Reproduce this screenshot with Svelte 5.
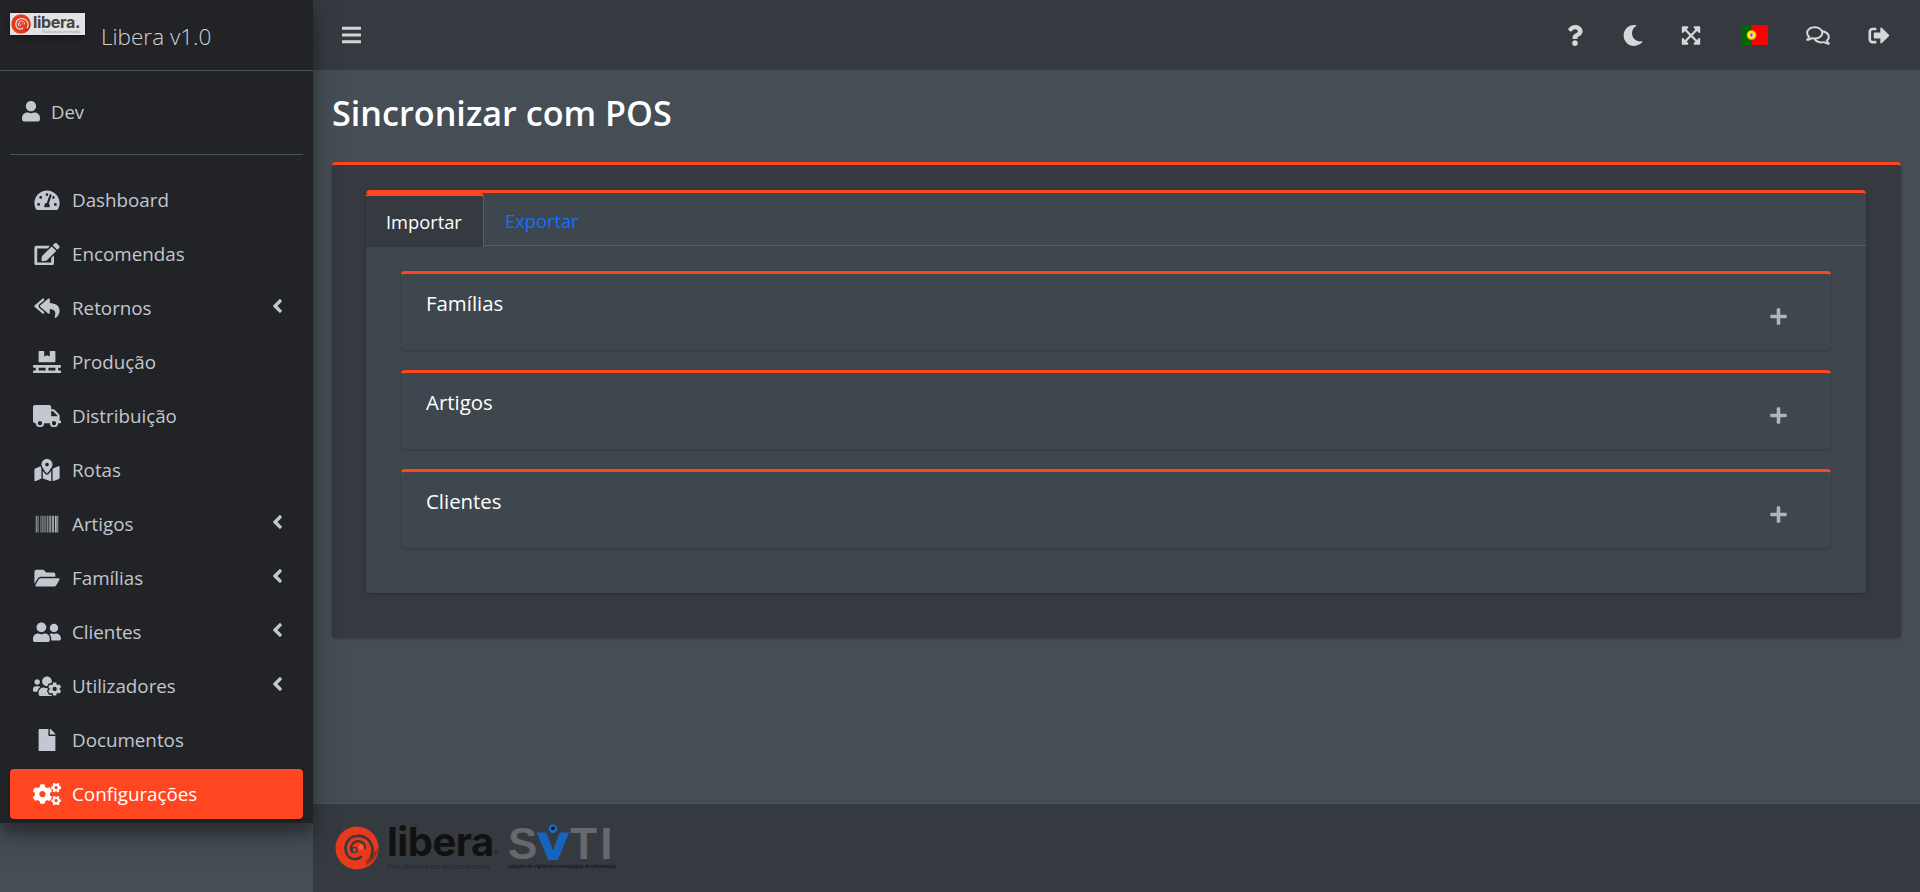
<script>
  const icons = {
    user: ['0 0 448 512', 'M224 256c70.7 0 128-57.3 128-128S294.7 0 224 0 96 57.3 96 128s57.3 128 128 128zm89.6 32h-16.7c-22.2 10.2-46.9 16-72.9 16s-50.6-5.8-72.9-16h-16.7C60.2 288 0 348.2 0 422.4V464c0 26.5 21.5 48 48 48h352c26.5 0 48-21.5 48-48v-41.6c0-74.2-60.2-134.4-134.4-134.4z'],
    gauge: ['0 0 576 512', 'M288 32C128.94 32 0 160.94 0 320c0 52.8 14.25 102.26 39.06 144.8 5.61 9.62 16.3 15.2 27.44 15.2h443c11.14 0 21.83-5.58 27.44-15.2C561.75 422.26 576 372.8 576 320c0-159.06-128.94-288-288-288zm0 64c14.71 0 26.58 10.13 30.32 23.65-1.11 2.26-2.64 4.23-3.45 6.67l-9.22 27.67c-5.13 3.49-10.97 6.01-17.64 6.01-17.67 0-32-14.33-32-32S270.33 96 288 96zM96 384c-17.67 0-32-14.33-32-32s14.33-32 32-32 32 14.33 32 32-14.33 32-32 32zm48-160c-17.67 0-32-14.33-32-32s14.33-32 32-32 32 14.33 32 32-14.33 32-32 32zm246.77-72.41l-61.33 184C343.13 347.33 352 364.54 352 384c0 11.72-3.38 22.55-8.88 32H232.88c-5.5-9.45-8.88-20.28-8.88-32 0-33.94 26.5-61.43 59.9-63.59l61.34-184.01c4.17-12.56 17.73-19.45 30.36-15.17 12.57 4.19 19.35 17.79 15.17 30.36zm14.66 57.2l15.52-46.55c3.47-1.29 7.13-2.23 11.05-2.23 17.67 0 32 14.33 32 32s-14.33 32-32 32c-11.38-.01-20.89-6.28-26.57-15.22zM480 384c-17.67 0-32-14.33-32-32s14.33-32 32-32 32 14.33 32 32-14.33 32-32 32z'],
    edit: ['0 0 576 512', 'M402.6 83.2l90.2 90.2c3.8 3.8 3.8 10 0 13.8L274.4 405.6l-92.8 10.3c-12.4 1.4-22.9-9.1-21.5-21.5l10.3-92.8L388.8 83.2c3.8-3.8 10-3.8 13.8 0zm162-22.9l-48.8-48.8c-15.2-15.2-39.9-15.2-55.2 0l-35.4 35.4c-3.8 3.8-3.8 10 0 13.8l90.2 90.2c3.8 3.8 10 3.8 13.8 0l35.4-35.4c15.2-15.3 15.2-40 0-55.2zM384 346.2V448H64V128h229.8c3.2 0 6.2-1.3 8.5-3.5l40-40c7.6-7.6 2.2-20.5-8.5-20.5H48C21.5 64 0 85.5 0 112v352c0 26.5 21.5 48 48 48h352c26.5 0 48-21.5 48-48V306.2c0-10.7-12.9-16-20.5-8.5l-40 40c-2.2 2.3-3.5 5.3-3.5 8.5z'],
    replyAll: ['0 0 576 512', 'M136.309 189.836L312.313 37.851C327.72 24.546 352 35.348 352 56.015v82.763c129.182 10.231 224 52.212 224 183.548 0 61.441-39.582 122.309-83.333 154.132-13.653 9.931-33.111-2.533-28.077-18.631 38.512-123.162-3.922-169.482-112.59-182.015v84.175c0 20.701-24.3 31.453-39.687 18.164L136.309 226.164c-11.071-9.561-11.086-26.753 0-36.328zm-128 36.328L184.313 378.15C199.7 391.439 224 380.687 224 359.986v-15.818l-108.606-93.785A55.96 55.96 0 0 1 96 207.998a55.953 55.953 0 0 1 19.393-42.38L224 71.832V56.015c0-20.667-24.28-31.469-39.687-18.164L8.309 189.836c-11.086 9.575-11.071 26.767 0 36.328z'],
    pallet: ['0 0 640 512', 'M144 256h352c8.8 0 16-7.2 16-16V16c0-8.8-7.2-16-16-16H384v128l-64-32-64 32V0H144c-8.8 0-16 7.2-16 16v224c0 8.8 7.2 16 16 16zm480 128c8.8 0 16-7.2 16-16v-32c0-8.8-7.2-16-16-16H16c-8.8 0-16 7.2-16 16v32c0 8.8 7.2 16 16 16h48v64H16c-8.8 0-16 7.2-16 16v32c0 8.8 7.2 16 16 16h608c8.8 0 16-7.2 16-16v-32c0-8.8-7.2-16-16-16h-48v-64h48zm-336 64H128v-64h160v64zm224 0H352v-64h160v64z'],
    truck: ['0 0 640 512', 'M624 352h-16V243.9c0-12.7-5.1-24.9-14.1-33.9L494 110.1c-9-9-21.2-14.1-33.9-14.1H416V48c0-26.5-21.5-48-48-48H48C21.5 0 0 21.5 0 48v320c0 26.5 21.5 48 48 48h16c0 53 43 96 96 96s96-43 96-96h128c0 53 43 96 96 96s96-43 96-96h48c8.8 0 16-7.2 16-16v-32c0-8.8-7.2-16-16-16zM160 464c-26.5 0-48-21.5-48-48s21.5-48 48-48 48 21.5 48 48-21.5 48-48 48zm320 0c-26.5 0-48-21.5-48-48s21.5-48 48-48 48 21.5 48 48-21.5 48-48 48zm80-208H416V144h44.1l99.9 99.9V256z'],
    map: ['0 0 576 512', 'M288 0c-69.59 0-126 56.41-126 126 0 56.26 82.35 158.8 113.9 196.02 6.39 7.54 17.82 7.54 24.2 0C331.65 284.8 414 182.26 414 126 414 56.41 357.59 0 288 0zm0 168c-23.2 0-42-18.8-42-42s18.8-42 42-42 42 18.8 42 42-18.8 42-42 42zM20.12 215.95A32.006 32.006 0 0 0 0 245.66v250.32c0 11.32 11.43 19.06 21.94 14.86L160 448V214.92c-8.84-15.98-16.07-31.54-21.25-46.42L20.12 215.95zM288 359.67c-14.07 0-27.38-6.18-36.51-16.96-19.66-23.2-40.57-49.62-59.49-76.72V448l192 64V266c-18.92 27.09-39.82 53.52-59.49 76.72-9.13 10.77-22.44 16.95-36.51 16.95zm266.06-198.51L416 224v288l139.88-55.95A31.996 31.996 0 0 0 576 426.34V176.02c0-11.32-11.43-19.06-21.94-14.86z'],
    barcode: ['0 0 512 512', 'M0 448V64h18v384H0zm26.857-.273V64H36v383.727h-9.143zm27.143 0V64h8.857v383.727H54zm44.857 0V64h8.857v383.727h-8.857zm36 0V64h17.714v383.727h-17.714zm44.857 0V64h8.857v383.727h-8.857zm18 0V64h8.857v383.727h-8.857zm18 0V64h8.857v383.727h-8.857zm35.715 0V64h18v383.727h-18zm44.857 0V64h18v383.727h-18zm35.999 0V64h18.001v383.727h-18.001zm36.001 0V64h18.001v383.727h-18.001zm26.857 0V64h18v383.727h-18zm45.143 0V64h26.857v383.727h-26.857zm35.714 0V64h9.143v383.727H476zm18 .273V64h18v384h-18z'],
    folder: ['0 0 576 512', 'M572.694 292.093L500.27 416.248A63.997 63.997 0 0 1 444.989 448H45.025c-18.523 0-30.064-20.093-20.731-36.093l72.424-124.155A64 64 0 0 1 152 256h399.964c18.523 0 30.064 20.093 20.73 36.093zM152 224h328v-48c0-26.51-21.49-48-48-48H272l-64-64H48C21.49 64 0 85.49 0 112v278.046l69.077-118.418C86.214 242.25 117.989 224 152 224z'],
    friends: ['0 0 640 512', 'M192 256c61.9 0 112-50.1 112-112S253.9 32 192 32 80 82.1 80 144s50.1 112 112 112zm76.8 32h-8.3c-20.8 10-43.9 16-68.5 16s-47.6-6-68.5-16h-8.3C51.6 288 0 339.6 0 403.2V432c0 26.5 21.5 48 48 48h288c26.5 0 48-21.5 48-48v-28.8c0-63.6-51.6-115.2-115.2-115.2zM480 256c53 0 96-43 96-96s-43-96-96-96-96 43-96 96 43 96 96 96zm48 32h-3.8c-13.9 4.8-28.6 8-44.2 8s-30.3-3.2-44.2-8H432c-20.4 0-39.2 5.9-55.7 15.4 24.4 26.3 39.7 61.2 39.7 99.8v38.4c0 2.2-.5 4.3-.6 6.4H592c26.5 0 48-21.5 48-48 0-61.9-50.1-112-112-112z'],
    usersCog: ['0 0 640 512', 'M610.5 341.3c2.6-14.1 2.6-28.5 0-42.6l25.8-14.9c3-1.7 4.3-5.2 3.3-8.5-6.7-21.6-18.2-41.2-33.2-57.4-2.3-2.5-6-3.1-9-1.4l-25.8 14.9c-10.9-9.3-23.4-16.5-36.9-21.3v-29.8c0-3.4-2.4-6.4-5.7-7.1-22.3-5-45-4.8-66.2 0-3.3.7-5.7 3.7-5.7 7.1v29.8c-13.5 4.8-26 12-36.9 21.3l-25.8-14.9c-2.9-1.7-6.7-1.1-9 1.4-15 16.2-26.5 35.8-33.2 57.4-1 3.3.4 6.8 3.3 8.5l25.8 14.9c-2.6 14.1-2.6 28.5 0 42.6l-25.8 14.9c-3 1.7-4.3 5.2-3.3 8.5 6.7 21.6 18.2 41.1 33.2 57.4 2.3 2.5 6 3.1 9 1.4l25.8-14.9c10.9 9.3 23.4 16.5 36.9 21.3v29.8c0 3.4 2.4 6.4 5.7 7.1 22.3 5 45 4.8 66.2 0 3.3-.7 5.7-3.7 5.7-7.1v-29.8c13.5-4.8 26-12 36.9-21.3l25.8 14.9c2.9 1.7 6.7 1.1 9-1.4 15-16.2 26.5-35.8 33.2-57.4 1-3.3-.4-6.8-3.3-8.5l-25.8-14.9zM496 368.5c-26.8 0-48.5-21.8-48.5-48.5s21.8-48.5 48.5-48.5 48.5 21.8 48.5 48.5-21.7 48.5-48.5 48.5zM96 224c35.3 0 64-28.7 64-64s-28.7-64-64-64-64 28.7-64 64 28.7 64 64 64zm224 32c1.9 0 3.7-.5 5.6-.6 8.3-21.7 20.5-42.1 36.3-59.2 7.4-8 17.9-12.6 28.9-12.6 6.9 0 13.7 1.8 19.6 5.3l7.9 4.6c.8-.5 1.6-.9 2.4-1.4 7-14.6 11.2-30.8 11.2-48 0-61.9-50.1-112-112-112S208 82.1 208 144c0 61.9 50.1 112 112 112zm105.2 194.5c-2.3-1.2-4.6-2.6-6.8-3.9-8.2 4.8-15.3 9.8-27.5 9.8-10.9 0-21.4-4.6-28.9-12.6-18.3-19.8-32.3-43.9-40.2-69.6-10.7-34.5 24.9-49.7 25.8-50.3-.1-2.6-.1-5.2 0-7.8l-7.9-4.6c-3.8-2.2-7-5-9.8-8.1-3.3.2-6.5.6-9.8.6-24.6 0-47.6-6-68.5-16h-8.3C179.6 288 128 339.6 128 403.2V432c0 26.5 21.5 48 48 48h255.4c-3.7-6-6.2-12.8-6.2-20.3v-9.2zM173.1 274.6C161.5 263.1 145.6 256 128 256H64c-35.3 0-64 28.7-64 64v32c0 17.7 14.3 32 32 32h65.9c6.3-47.4 34.9-87.3 75.2-109.4z'],
    file: ['0 0 384 512', 'M224 136V0H24C10.7 0 0 10.7 0 24v464c0 13.3 10.7 24 24 24h336c13.3 0 24-10.7 24-24V160H248c-13.2 0-24-10.8-24-24zm160-14.1v6.1H256V0h6.1c6.4 0 12.5 2.5 17 7l97.9 98c4.5 4.5 7 10.6 7 16.9z'],
    cogs: ['0 0 640 512', 'M512.1 191l-8.2 14.3c-3 5.3-9.4 7.5-15.1 5.4-11.8-4.4-22.6-10.7-32.1-18.6-4.6-3.8-5.8-10.5-2.8-15.7l8.2-14.3c-6.9-8-12.3-17.3-15.9-27.4h-16.5c-6 0-11.2-4.3-12.2-10.3-2-12-2.1-24.6 0-37.1 1-6 6.2-10.4 12.2-10.4h16.5c3.6-10.1 9-19.4 15.9-27.4l-8.2-14.3c-3-5.2-1.9-11.9 2.8-15.7 9.5-7.9 20.4-14.2 32.1-18.6 5.7-2.1 12.1.1 15.1 5.4l8.2 14.3c10.5-1.9 21.2-1.9 31.7 0L552 6.3c3-5.3 9.4-7.5 15.1-5.4 11.8 4.4 22.6 10.7 32.1 18.6 4.6 3.8 5.8 10.5 2.8 15.7l-8.2 14.3c6.9 8 12.3 17.3 15.9 27.4h16.5c6 0 11.2 4.3 12.2 10.3 2 12 2.1 24.6 0 37.1-1 6-6.2 10.4-12.2 10.4h-16.5c-3.6 10.1-9 19.4-15.9 27.4l8.2 14.3c3 5.2 1.9 11.9-2.8 15.7-9.5 7.9-20.4 14.2-32.1 18.6-5.7 2.1-12.1-.1-15.1-5.4l-8.2-14.3c-10.4 1.9-21.2 1.9-31.7 0zm-10.5-58.8c38.5 29.6 82.4-14.3 52.8-52.8-38.5-29.7-82.4 14.3-52.8 52.8zM386.3 286.1l33.7 16.8c10.1 5.8 14.5 18.1 10.5 29.1-8.9 24.2-26.4 46.4-42.6 65.8-7.4 8.9-20.2 11.1-30.3 5.3l-29.1-16.8c-16 13.7-34.6 24.6-54.9 31.7v33.6c0 11.6-8.3 21.6-19.7 23.6-24.6 4.2-50.4 4.4-75.9 0-11.5-2-20-11.9-20-23.6V418c-20.3-7.2-38.9-18-54.9-31.7L74 403c-10 5.8-22.9 3.6-30.3-5.3-16.2-19.4-33.3-41.6-42.2-65.7-4-10.9.4-23.2 10.5-29.1l33.3-16.8c-3.9-20.9-3.9-42.4 0-63.4L12 205.8c-10.1-5.8-14.6-18.1-10.5-29 8.9-24.2 26-46.4 42.2-65.8 7.4-8.9 20.2-11.1 30.3-5.3l29.1 16.8c16-13.7 34.6-24.6 54.9-31.7V57.1c0-11.5 8.2-21.5 19.6-23.5 24.6-4.2 50.5-4.4 76-.1 11.5 2 20 11.9 20 23.6v33.6c20.3 7.2 38.9 18 54.9 31.7l29.1-16.8c10-5.8 22.9-3.6 30.3 5.3 16.2 19.4 33.2 41.6 42.1 65.8 4 10.9.1 23.2-10 29.1l-33.7 16.8c3.9 21 3.9 42.5 0 63.5zm-117.6 21.1c59.2-77-28.7-164.9-105.7-105.7-59.2 77 28.7 164.9 105.7 105.7zm243.4 182.7l-8.2 14.3c-3 5.3-9.4 7.5-15.1 5.4-11.8-4.4-22.6-10.7-32.1-18.6-4.6-3.8-5.8-10.5-2.8-15.7l8.2-14.3c-6.9-8-12.3-17.3-15.9-27.4h-16.5c-6 0-11.2-4.3-12.2-10.3-2-12-2.1-24.6 0-37.1 1-6 6.2-10.4 12.2-10.4h16.5c3.6-10.1 9-19.4 15.9-27.4l-8.2-14.3c-3-5.2-1.9-11.9 2.8-15.7 9.5-7.9 20.4-14.2 32.1-18.6 5.7-2.1 12.1.1 15.1 5.4l8.2 14.3c10.5-1.9 21.2-1.9 31.7 0l8.2-14.3c3-5.3 9.4-7.5 15.1-5.4 11.8 4.4 22.6 10.7 32.1 18.6 4.6 3.8 5.8 10.5 2.8 15.7l-8.2 14.3c6.9 8 12.3 17.3 15.9 27.4h16.5c6 0 11.2 4.3 12.2 10.3 2 12 2.1 24.6 0 37.1-1 6-6.2 10.4-12.2 10.4h-16.5c-3.6 10.1-9 19.4-15.9 27.4l8.2 14.3c3 5.2 1.9 11.9-2.8 15.7-9.5 7.9-20.4 14.2-32.1 18.6-5.7 2.1-12.1-.1-15.1-5.4l-8.2-14.3c-10.4 1.9-21.2 1.9-31.7 0zM501.6 431c38.5 29.6 82.4-14.3 52.8-52.8-38.5-29.6-82.4 14.3-52.8 52.8z'],
    angle: ['0 0 256 512', 'M31.7 239l136-136c9.4-9.4 24.6-9.4 33.9 0l22.6 22.6c9.4 9.4 9.4 24.6 0 33.9L127.9 256l96.4 96.4c9.4 9.4 9.4 24.6 0 33.9L201.7 409c-9.4 9.4-24.6 9.4-33.9 0l-136-136c-9.5-9.4-9.5-24.6-.1-34z'],
    bars: ['0 0 448 512', 'M16 132h416c8.837 0 16-7.163 16-16V76c0-8.837-7.163-16-16-16H16C7.163 60 0 67.163 0 76v40c0 8.837 7.163 16 16 16zm0 160h416c8.837 0 16-7.163 16-16v-40c0-8.837-7.163-16-16-16H16c-8.837 0-16 7.163-16 16v40c0 8.837 7.163 16 16 16zm0 160h416c8.837 0 16-7.163 16-16v-40c0-8.837-7.163-16-16-16H16c-8.837 0-16 7.163-16 16v40c0 8.837 7.163 16 16 16z'],
    question: ['0 0 384 512', 'M202.021 0C122.202 0 70.503 32.703 29.914 91.026c-7.363 10.58-5.093 25.086 5.178 32.874l43.138 32.709c10.373 7.865 25.132 6.026 33.253-4.148 25.049-31.381 43.63-49.449 82.757-49.449 30.764 0 68.816 19.799 68.816 49.631 0 22.552-18.617 34.134-48.993 51.164-35.423 19.86-82.299 44.576-82.299 106.405V320c0 13.255 10.745 24 24 24h72.471c13.255 0 24-10.745 24-24v-5.773c0-42.86 125.268-44.645 125.268-160.627C377.504 66.256 286.902 0 202.021 0zM192 373.459c-38.196 0-69.271 31.075-69.271 69.271 0 38.195 31.075 69.27 69.271 69.27s69.271-31.075 69.271-69.271-31.075-69.27-69.271-69.27z'],
    moon: ['0 0 512 512', 'M283.211 512c78.962 0 151.079-35.925 198.857-94.792 7.068-8.708-.639-21.43-11.562-19.35-124.203 23.654-238.262-71.576-238.262-196.954 0-72.222 38.662-138.635 101.498-174.394 9.686-5.512 7.25-20.197-3.756-22.23A258.156 258.156 0 0 0 283.211 0c-141.309 0-256 114.511-256 256 0 141.309 114.511 256 256 256z'],
    expand: ['0 0 448 512', 'M448 344v112a23.94 23.94 0 0 1-24 24H312c-21.39 0-32.09-25.9-17-41l36.2-36.2L224 295.6 116.77 402.9 153 439c15.09 15.1 4.39 41-17 41H24a23.94 23.94 0 0 1-24-24V344c0-21.4 25.89-32.1 41-17l36.19 36.2L184.46 256 77.18 148.7 41 185c-15.1 15.1-41 4.4-41-17V56a23.94 23.94 0 0 1 24-24h112c21.39 0 32.09 25.9 17 41l-36.2 36.2L224 216.4l107.23-107.3L295 73c-15.09-15.1-4.39-41 17-41h112a23.94 23.94 0 0 1 24 24v112c0 21.4-25.89 32.1-41 17l-36.19-36.2L263.54 256l107.28 107.3L407 327.1c15.1-15.2 41-4.5 41 16.9z'],
    comments: ['0 0 576 512', 'M532 386.2c27.5-27.1 44-61.1 44-98.2 0-80-76.5-146.1-176.2-157.9C368.3 72.5 294.3 32 208 32 93.1 32 0 103.6 0 192c0 37 16.5 71 44 98.2-15.3 30.7-37.3 54.5-37.7 54.9-6.3 6.7-8.1 16.5-4.4 25 3.6 8.5 12 14 21.2 14 53.5 0 96.7-20.2 125.2-38.8 9.2 2.1 18.7 3.7 28.4 4.9C208.1 407.6 281.8 448 368 448c20.8 0 40.8-2.4 59.8-6.8C456.3 459.7 499.4 480 553 480c9.2 0 17.5-5.5 21.2-14 3.6-8.5 1.9-18.3-4.4-25-.4-.3-22.5-24.1-37.8-54.8zm-392.8-92.3L122.1 305c-14.1 9.1-28.5 16.3-43.1 21.4 2.7-4.7 5.4-9.7 8-14.8l15.5-31.1L77.7 256C64.2 242.6 48 220.7 48 192c0-60.7 73.3-112 160-112s160 51.3 160 112-73.3 112-160 112c-16.5 0-33-1.9-49-5.6l-19.8-4.5zM498.3 352l-24.7 24.4 15.5 31.1c2.6 5.1 5.3 10.1 8 14.8-14.6-5.1-29-12.3-43.1-21.4l-17.1-11.1-19.9 4.6c-16 3.7-32.5 5.6-49 5.6-54 0-102.2-20.1-131.3-49.7C338 339.5 416 272.9 416 192c0-3.4-.4-6.7-.7-10C479.7 196.5 528 238.8 528 288c0 28.7-16.2 50.6-29.7 64z'],
    signOut: ['0 0 512 512', 'M497 273L329 441c-15 15-41 4.5-41-17v-96H152c-13.3 0-24-10.7-24-24v-96c0-13.3 10.7-24 24-24h136V88c0-21.4 25.9-32 41-17l168 168c9.3 9.4 9.3 24.6 0 34zM192 436v-40c0-6.6-5.4-12-12-12H96c-17.7 0-32-14.3-32-32V160c0-17.7 14.3-32 32-32h84c6.6 0 12-5.4 12-12V76c0-6.6-5.4-12-12-12H96c-53 0-96 43-96 96v192c0 53 43 96 96 96h84c6.6 0 12-5.4 12-12z'],
    plus: ['0 0 448 512', 'M416 208H272V64c0-17.67-14.33-32-32-32h-32c-17.67 0-32 14.33-32 32v144H32c-17.67 0-32 14.33-32 32v32c0 17.67 14.33 32 32 32h144v144c0 17.67 14.33 32 32 32h32c17.67 0 32-14.33 32-32V304h144c17.67 0 32-14.33 32-32v-32c0-17.67-14.33-32-32-32z']
  };

  const nav = [
    { label: 'Dashboard', icon: 'gauge' },
    { label: 'Encomendas', icon: 'edit' },
    { label: 'Retornos', icon: 'replyAll', sub: true },
    { label: 'Produção', icon: 'pallet' },
    { label: 'Distribuição', icon: 'truck' },
    { label: 'Rotas', icon: 'map' },
    { label: 'Artigos', icon: 'barcode', sub: true },
    { label: 'Famílias', icon: 'folder', sub: true },
    { label: 'Clientes', icon: 'friends', sub: true },
    { label: 'Utilizadores', icon: 'usersCog', sub: true },
    { label: 'Documentos', icon: 'file' },
    { label: 'Configurações', icon: 'cogs', active: true }
  ];

  const sections = ['Famílias', 'Artigos', 'Clientes'];
</script>

{#snippet fa(name, cls)}
  <svg class={cls} viewBox={icons[name][0]} aria-hidden="true"><path fill="currentColor" d={icons[name][1]} /></svg>
{/snippet}

<!-- swirl mark: the cut lines take currentColor so it sits on either background -->
{#snippet swirl(cls)}
  <svg class={cls} viewBox="0 0 44 44" aria-hidden="true">
    <circle cx="22" cy="22" r="21.5" fill="#e8391c" />
    <path d="M31 39a20 20 0 0 0 12-17l-12 13z" fill="#a32a18" />
    <path d="M36 31C41 20 33 9 22 10C14 10 9 18 11 26C13 33 21 35 26 31" fill="none" stroke="currentColor" stroke-width="2.6" stroke-linecap="round" />
    <path d="M30 22C30 16 24 14 20 16C16 18 15 22 17 26" fill="none" stroke="currentColor" stroke-width="2.2" stroke-linecap="round" />
    <circle cx="19.5" cy="24" r="3.2" fill="currentColor" />
    <circle cx="19.5" cy="24" r="1.9" fill="#e8391c" />
    <circle cx="26" cy="21" r="2.6" fill="#ff5a30" />
  </svg>
{/snippet}

<div class="layout">
  <aside class="sidebar">
    <div class="brand">
      <div class="brand-logo">
        {@render swirl('brand-swirl')}
        <div class="brand-words">
          <span class="brand-name">libera.</span>
          <span class="brand-tag">Plataforma de encomendas</span>
        </div>
      </div>
      <span class="brand-text">Libera v1.0</span>
    </div>
    <div class="panel">
      <div class="user">
        {@render fa('user', 'user-icon')}
        <span>Dev</span>
      </div>
      <ul class="nav">
        {#each nav as item}
          <li class="nav-item" class:active={item.active}>
            <span class="nav-icon">{@render fa(item.icon, 'nav-svg')}</span>
            <span class="nav-label">{item.label}</span>
            {#if item.sub}{@render fa('angle', 'angle')}{/if}
          </li>
        {/each}
      </ul>
    </div>
  </aside>

  <div class="main">
    <header class="topbar">
      <div class="top-link bars">{@render fa('bars', 'top-bars')}</div>
      <div class="top-right">
        <div class="top-link">{@render fa('question', 'top-icon')}</div>
        <div class="top-link">{@render fa('moon', 'top-icon')}</div>
        <div class="top-link">{@render fa('expand', 'top-icon')}</div>
        <div class="top-link flag-link">
          <svg class="flag" viewBox="0 0 27 20" aria-hidden="true">
            <rect width="27" height="20" fill="#f00" />
            <rect width="10.5" height="20" fill="#060" />
            <circle cx="10.5" cy="10" r="4.6" fill="#ffe000" stroke="#c9a400" stroke-width="0.6" />
            <circle cx="10.5" cy="10" r="2.6" fill="#e8e8e8" />
            <rect x="9.5" y="8.5" width="2" height="3" fill="#b33" />
          </svg>
        </div>
        <div class="top-link">{@render fa('comments', 'top-icon')}</div>
        <div class="top-link last">{@render fa('signOut', 'top-icon')}</div>
      </div>
    </header>

    <main class="content">
      <h1>Sincronizar com POS</h1>
      <section class="card outer">
        <div class="tabs-card">
          <div class="tabs">
            <span class="tab active">Importar</span>
            <span class="tab">Exportar</span>
          </div>
          <div class="tab-body">
            {#each sections as title}
              <div class="acc">
                <span class="acc-title">{title}</span>
                {@render fa('plus', 'acc-plus')}
              </div>
            {/each}
          </div>
        </div>
      </section>
    </main>

    <footer class="footer">
      <div class="foot-libera">
        {@render swirl('foot-swirl')}
        <div class="foot-words">
          <span class="foot-name">libera<small>®</small></span>
          <span class="foot-tag">Plataforma de encomendas</span>
        </div>
      </div>
      <div class="svti">
        <div class="svti-mark">
          <span class="svti-s">S</span>
          <svg class="svti-v" viewBox="0 0 40 40" aria-hidden="true">
            <path d="M3 9h10l7 19 7-19h10L25 38h-10z" fill="#1565c0" />
            <circle cx="20" cy="5" r="4.5" fill="#1a6fc4" />
            <circle cx="20" cy="4.5" r="2" fill="#0b1a2c" />
          </svg>
          <span class="svti-s ti">TI</span>
        </div>
        <span class="svti-tag">soluções de vigilância e tecnologias de informação</span>
      </div>
    </footer>
  </div>
</div>

<style>
  :global(body) { margin: 0; background: #454d55; font-family: "Open Sans", "Noto Sans", sans-serif; }

  .layout { display: flex; height: 892px; overflow: hidden; background: #454d55; }

  /* sidebar */
  .sidebar { width: 313px; flex: none; align-self: flex-start; background: #212327; box-shadow: 0 14px 28px rgba(0, 0, 0, .25), 0 10px 10px rgba(0, 0, 0, .22); position: relative; z-index: 2; }
  .brand { height: 71px; box-sizing: border-box; border-bottom: 1px solid #4b545c; position: relative; display: flex; align-items: center; padding-left: 101px; }
  .brand-logo { position: absolute; left: 10px; top: 13px; width: 75px; height: 22px; background: #e2e2e2; color: #e2e2e2; box-shadow: 0 3px 6px rgba(0, 0, 0, .3); display: flex; align-items: center; gap: 2px; padding-left: 1px; box-sizing: border-box; overflow: hidden; }
  .brand-text { color: rgba(255, 255, 255, .8); font-size: 22.5px; font-weight: 300; position: relative; top: 1px; }
  :global(.brand-swirl) { width: 20px; height: 20px; flex: none; }
  .brand-words { display: flex; flex-direction: column; line-height: 1; }
  .brand-name { color: #444; font-size: 16px; font-weight: 700; line-height: 15px; font-family: "Inter", sans-serif; letter-spacing: -0.3px; }
  .brand-tag { color: #888; font-size: 3px; line-height: 4px; padding-left: 9px; white-space: nowrap; }

  .panel { padding: 0 10px; }
  .user { height: 84px; box-sizing: border-box; padding-bottom: 2px; border-bottom: 1px solid #4b545c; margin-bottom: 20px; display: flex; align-items: center; gap: 11px; padding-left: 12px; color: #c2c7d0; font-size: 18.5px; }
  :global(.user-icon) { height: 20.5px; width: 18px; }

  .nav { list-style: none; margin: 0; padding: 0; }
  .nav-item { height: 50px; margin-bottom: 4px; border-radius: 4px; display: flex; align-items: center; color: #c2c7d0; font-size: 18.8px; padding-left: 23px; padding-right: 20px; }
  .nav-item.active { background: #ff4620; color: #fff; box-shadow: 0 1px 3px rgba(0, 0, 0, .12), 0 1px 2px rgba(0, 0, 0, .24); }
  .nav-icon { width: 28px; height: 24px; margin-right: 11px; display: flex; align-items: center; justify-content: center; flex: none; }
  :global(.nav-svg) { height: 22.4px; width: 28px; }
  .nav-label { flex: 1; }
  :global(.angle) { height: 22px; width: 11px; position: relative; top: -2px; }

  /* main column */
  .main { flex: 1; display: flex; flex-direction: column; min-width: 0; }
  .topbar { height: 70px; flex: none; background: #343a40; display: flex; align-items: center; justify-content: space-between; box-sizing: border-box; }
  .top-right { display: flex; align-items: center; padding-right: 9px; }
  .top-link { width: 58px; display: flex; justify-content: center; color: rgba(255, 255, 255, .8); }
  .top-link.bars { width: 77px; }
  .top-link.last { width: 64px; }
  .flag-link { width: 69px; }
  :global(.top-icon) { height: 21px; width: 24px; }
  :global(.top-bars) { height: 22px; width: 19px; }
  .flag { width: 27px; height: 20px; display: block; }

  .content { flex: 1; padding: 0 19px; box-sizing: border-box; }
  h1 { margin: 0; height: 92px; box-sizing: border-box; padding-bottom: 8px; display: flex; align-items: center; color: #fff; font-size: 34.2px; font-weight: 600; }
  .card { border-top: 3px solid #ff4620; border-radius: 4px; box-shadow: 0 0 1px rgba(0, 0, 0, .125), 0 1px 3px rgba(0, 0, 0, .2); }
  .outer { background: #343a40; padding: 25px 35px 45px 34px; }

  .tabs-card { background: #3f474e; border-top: 3px solid #ff4620; border-radius: 4px; box-shadow: 0 0 1px rgba(0, 0, 0, .125), 0 1px 3px rgba(0, 0, 0, .2); }
  .tabs { display: flex; height: 53px; box-sizing: border-box; border-bottom: 1px solid #565e66; }
  .tab { width: 118px; box-sizing: border-box; padding-left: 21px; padding-top: 2px; display: flex; align-items: center; color: #0f70ff; font-size: 18.3px; }
  .tab.active { background: #343a40; color: #fff; border-top: 3px solid #ff4620; border-right: 1px solid #565e66; border-radius: 4px 4px 0 0; height: 54px; padding-left: 20px; padding-top: 0; }

  .tab-body { padding: 25px 35px 45px; display: flex; flex-direction: column; gap: 20px; }
  .acc { height: 79px; box-sizing: border-box; background: #3f474e; border-top: 3px solid #ff4620; border-radius: 4px; box-shadow: 0 0 1px rgba(0, 0, 0, .125), 0 1px 3px rgba(0, 0, 0, .2); display: flex; justify-content: space-between; padding: 15px 44px 0 25px; }
  .acc-title { color: #fff; font-size: 20.4px; line-height: 28px; }
  :global(.acc-plus) { height: 19px; width: 17px; color: #adb5bd; margin-top: 18px; }

  /* footer */
  .footer { height: 89px; flex: none; box-sizing: border-box; background: #343a40; color: #343a40; border-top: 1px solid #4b545c; display: flex; align-items: center; gap: 6px; padding-left: 22px; }
  .foot-libera { display: flex; align-items: center; gap: 8px; }
  :global(.foot-swirl) { width: 44px; height: 44px; }
  .foot-words { display: flex; flex-direction: column; width: 115px; }
  .foot-name { color: #111; font-family: "Inter", sans-serif; font-size: 40px; font-weight: 700; line-height: 36px; letter-spacing: -0.5px; white-space: nowrap; }
  .foot-name small { font-size: 7px; line-height: 1; color: #222; }
  .foot-tag { color: #23282d; font-size: 8px; line-height: 12px; white-space: nowrap; }
  .svti { display: flex; flex-direction: column; width: 108px; }
  .svti-mark { display: flex; align-items: flex-end; height: 36px; }
  .svti-s { color: #66686c; font-family: "Liberation Sans", sans-serif; font-weight: 700; font-size: 44px; line-height: 36px; }
  .svti-s.ti { letter-spacing: 3px; }
  .svti-v { width: 38px; height: 38px; margin: 0 -2px 0 -3px; flex: none; }
  .svti-tag { color: #16191d; font-size: 4.3px; line-height: 8px; font-weight: 700; white-space: nowrap; }
</style>
